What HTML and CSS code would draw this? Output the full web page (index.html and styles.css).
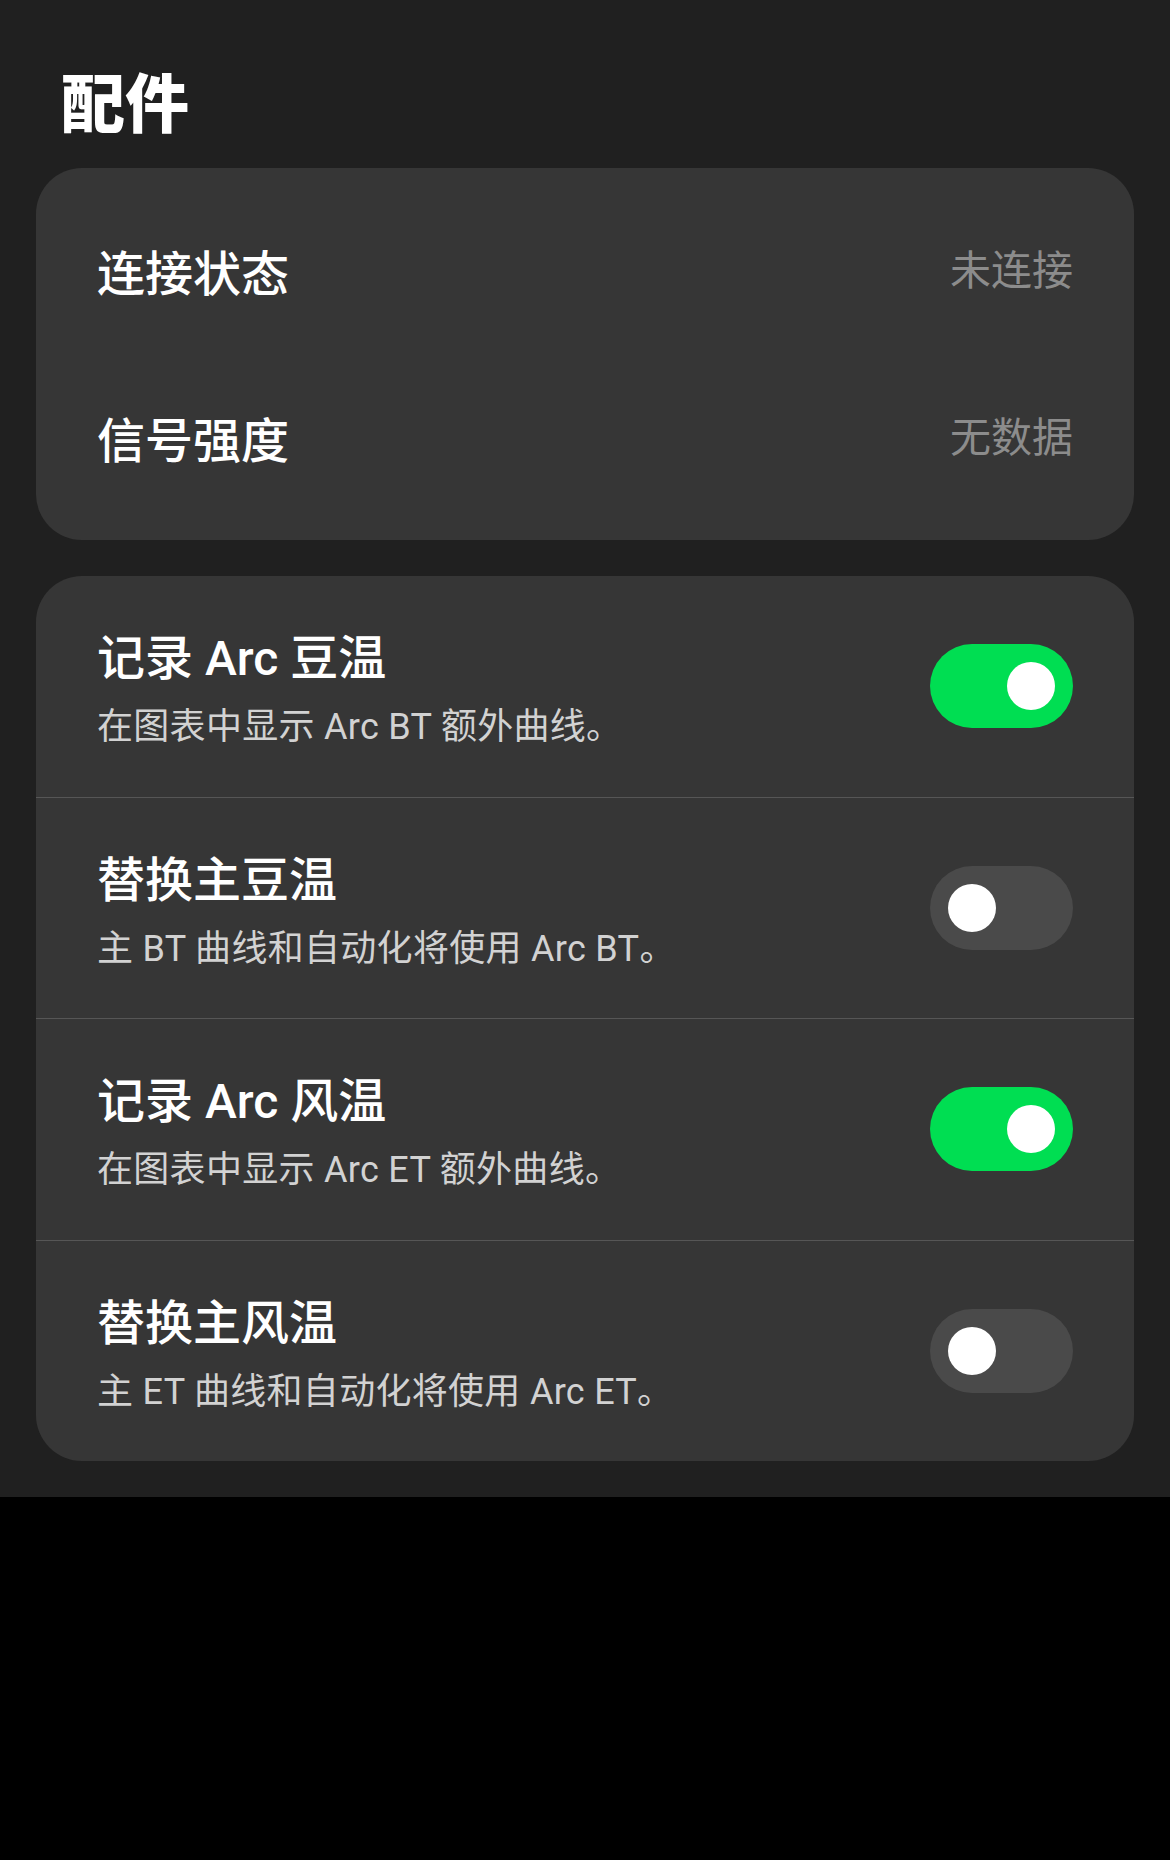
FILE: index.html
```html
<!DOCTYPE html>
<html lang="zh-CN">
<head>
<meta charset="utf-8">
<title>配件</title>
<link rel="stylesheet" href="styles.css">
</head>
<body>
<div class="page">
  <h1 class="page-title">配件</h1>

  <section class="card info-card">
    <div class="info-row">
      <span class="label">连接状态</span>
      <span class="value">未连接</span>
    </div>
    <div class="info-row">
      <span class="label">信号强度</span>
      <span class="value">无数据</span>
    </div>
  </section>

  <section class="card toggle-card">
    <div class="toggle-row">
      <div class="texts">
        <div class="label">记录 Arc 豆温</div>
        <div class="desc">在图表中显示 Arc BT 额外曲线。</div>
      </div>
      <div class="switch on"><span class="knob"></span></div>
    </div>
    <div class="toggle-row">
      <div class="texts">
        <div class="label">替换主豆温</div>
        <div class="desc">主 BT 曲线和自动化将使用 Arc BT。</div>
      </div>
      <div class="switch"><span class="knob"></span></div>
    </div>
    <div class="toggle-row">
      <div class="texts">
        <div class="label">记录 Arc 风温</div>
        <div class="desc">在图表中显示 Arc ET 额外曲线。</div>
      </div>
      <div class="switch on"><span class="knob"></span></div>
    </div>
    <div class="toggle-row">
      <div class="texts">
        <div class="label">替换主风温</div>
        <div class="desc">主 ET 曲线和自动化将使用 Arc ET。</div>
      </div>
      <div class="switch"><span class="knob"></span></div>
    </div>
  </section>
</div>
</body>
</html>
```

FILE: styles.css
```css
html, body {
  margin: 0;
  padding: 0;
  background: #000;
}

body {
  font-family: Roboto, "Noto Sans CJK SC", sans-serif;
  color: #fff;
}

.page {
  background: #202020;
  padding: 61px 36px 36px;
  display: flex;
  flex-direction: column;
}

.page-title {
  margin: 0 0 30px 25px;
  font-family: "Noto Sans CJK SC", sans-serif;
  font-size: 64px;
  line-height: 77px;
  font-weight: 900;
  color: #fff;
}

.card {
  background: #363636;
  border-radius: 46px;
  overflow: hidden;
}

.info-card {
  padding: 19px 61px 19px;
  margin-bottom: 36px;
}

.info-row {
  height: 167px;
  display: flex;
  align-items: center;
  justify-content: space-between;
}

.info-row .label {
  margin-top: 7px;
}

.label {
  font-size: 48px;
  line-height: 61px;
  font-weight: 500;
  color: #fff;
}

.value {
  font-size: 41px;
  line-height: 54px;
  color: #8c8c8c;
}

.toggle-row {
  height: 220.5px;
  padding: 0 61px;
  display: flex;
  align-items: center;
  justify-content: space-between;
}

.toggle-row + .toggle-row {
  border-top: 1px solid #565656;
}

.texts {
  display: flex;
  flex-direction: column;
  gap: 15px;
  padding-top: 7px;
}

.desc {
  font-size: 36px;
  line-height: 47px;
  color: #d2d2d2;
  letter-spacing: 0.3px;
}

.switch {
  width: 143px;
  height: 84px;
  border-radius: 42px;
  background: #4a4a4a;
  display: flex;
  align-items: center;
  padding: 0 18px;
  box-sizing: border-box;
  flex-shrink: 0;
}

.switch.on {
  background: #00de52;
  justify-content: flex-end;
}

.knob {
  width: 48px;
  height: 48px;
  border-radius: 50%;
  background: #fff;
}
```
